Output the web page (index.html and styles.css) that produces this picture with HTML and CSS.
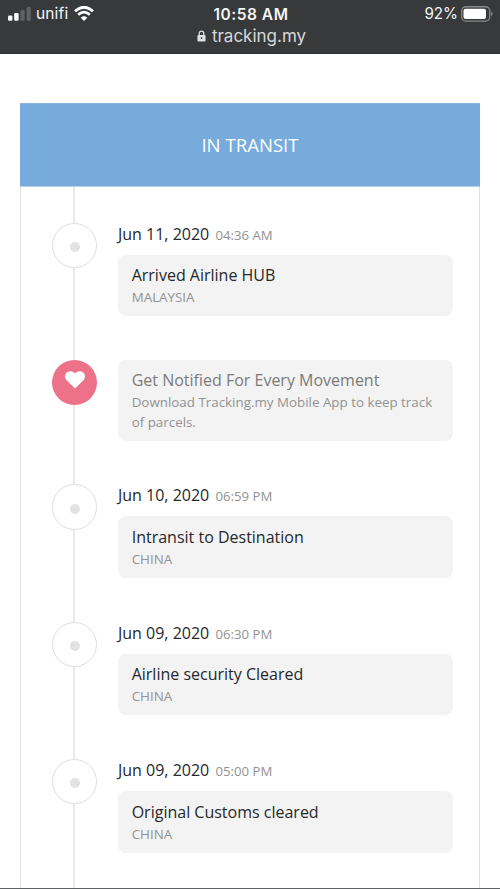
FILE: index.html
```
<!DOCTYPE html>
<html lang="en">
<head>
<meta charset="utf-8">
<title>tracking.my</title>
<link rel="stylesheet" href="styles.css">
</head>
<body>
<header class="browser">
  <div class="status">
    <div class="carrier">
      <svg class="signal" viewBox="0 0 24 14"><rect x="0" y="8.5" width="4.4" height="5.2" rx="1.2"/><rect x="6.2" y="6" width="4.4" height="7.7" rx="1.2"/><rect class="dim" x="12.4" y="3" width="4.2" height="10.7" rx="1"/><rect class="dim" x="18.6" y="0" width="4.2" height="13.7" rx="1"/></svg>
      <span>unifi</span>
      <svg class="wifi" viewBox="0 0 20 15"><path d="M1 5.2Q10-2.8 19 5.2M4.2 8.7Q10 3.5 15.8 8.7"/><path class="fill" d="M6.7 11.7Q10 8.8 13.3 11.7L10 15Z"/></svg>
    </div>
    <time class="clock">10:58 AM</time>
    <div class="power"><span>92%</span>
      <svg class="battery" viewBox="0 0 33 16"><rect class="shell" x=".75" y=".75" width="28" height="14.3" rx="4"/><rect x="2.5" y="2.7" width="22.5" height="10.4" rx="2"/><path class="tip" d="M30.2 5.2Q33 7.9 30.2 10.6Z"/></svg>
    </div>
  </div>
  <div class="address"><svg class="lock" viewBox="0 0 10 13"><path class="shackle" d="M2.5 6V3.5a2.5 2.5 0 0 1 5 0V6"/><rect x=".5" y="5.5" width="9" height="7" rx="1"/><circle class="keyhole" cx="5" cy="8.8" r="1"/></svg><span>tracking.my</span></div>
</header>
<main class="tracking">
  <h1 class="banner">IN TRANSIT</h1>
  <ol class="timeline">
    <li class="event"><span class="marker"></span><div class="body"><div class="date">Jun 11, 2020 <time>04:36 AM</time></div><div class="card"><h2>Arrived Airline HUB</h2><p>MALAYSIA</p></div></div></li>
    <li class="event promo"><span class="marker love"><svg viewBox="0 0 20 18"><path d="M10 17.5L1.8 9.5C-.5 7.2-.5 3.5 1.8 1.6C4.3-.5 7.7-.2 10 2.3C12.3-.2 15.7-.5 18.2 1.6C20.5 3.5 20.5 7.2 18.2 9.5Z"/></svg></span><div class="body"><div class="card"><h2>Get Notified For Every Movement</h2><p>Download Tracking.my Mobile App to keep track<br>of parcels.</p></div></div></li>
    <li class="event"><span class="marker"></span><div class="body"><div class="date">Jun 10, 2020 <time>06:59 PM</time></div><div class="card"><h2>Intransit to Destination</h2><p>CHINA</p></div></div></li>
    <li class="event"><span class="marker"></span><div class="body"><div class="date">Jun 09, 2020 <time>06:30 PM</time></div><div class="card"><h2>Airline security Cleared</h2><p>CHINA</p></div></div></li>
    <li class="event"><span class="marker"></span><div class="body"><div class="date">Jun 09, 2020 <time>05:00 PM</time></div><div class="card"><h2>Original Customs cleared</h2><p>CHINA</p></div></div></li>
  </ol>
</main>
</body>
</html>
```
FILE: styles.css
```
* { box-sizing: border-box; }
html, body { height: 889px; overflow: hidden; }
body { margin: 0; background: #fff; border-bottom: 1px solid #606163; color: #26282b; font-family: "Open Sans", sans-serif; }
h1, h2, p, ol { margin: 0; padding: 0; font-weight: 400; }
.browser { height: 54px; background: #38393b; border-bottom: 1px solid #2d2e30; color: #f5f5f5; font-family: Inter, sans-serif; }
.status { display: grid; grid-template-columns: 1fr auto 1fr; height: 27px; padding: 0 6px 0 8px; align-items: center; font-size: 15.5px; }
.carrier, .power { display: flex; align-items: center; }
.carrier { letter-spacing: .15px; }
.power { justify-content: flex-end; gap: 3px; font-size: 15.2px; }
.clock { font-weight: 600; letter-spacing: .5px; padding-top: 1px; }
.browser svg { fill: #fff; }
.signal { width: 24px; height: 14px; margin-right: 4px; }
.browser .dim { fill: #606163; }
.wifi { width: 20px; height: 15px; margin-left: 6px; }
.wifi path { fill: none; stroke: #fff; stroke-width: 2.8; }
.wifi .fill { fill: #fff; stroke: none; }
.battery { width: 33px; height: 16px; }
.battery .shell { fill: none; stroke: #88898a; stroke-width: 1.3; }
.browser .tip { fill: #88898a; }
.address { display: flex; justify-content: center; align-items: center; gap: 6px; height: 17px; padding-left: 3px; font-size: 17px; color: #d8d8d9; }
.browser .lock { width: 9px; height: 12px; fill: #dedede; }
.lock .shackle { fill: none; stroke: #dedede; stroke-width: 1.4; }
.browser .keyhole { fill: #38393b; }
.tracking { height: 785px; margin: 49px 20px 0; border: solid #e2e2e3; border-width: 0 1px; }
.banner { height: 84px; margin: 0 -1px; background: #76abdc; border-top: 1px solid #8ab7e0; border-bottom: 1px solid #b5d0e9; color: #fff; font-size: 18.6px; line-height: 82px; text-align: center; }
.timeline { height: 701px; padding-top: 35.5px; list-style: none; background: linear-gradient(#e9e9e9, #e9e9e9) 52px 0 / 2px 100% no-repeat; }
.event { display: flex; height: 137.3px; padding-left: 31px; }
.promo { height: 124.7px; }
.marker { display: flex; align-items: center; justify-content: center; width: 45.4px; height: 45.4px; flex: none; border: 1px solid #dedede; border-radius: 50%; background: #fff; }
.marker:empty::before { content: ""; width: 10px; height: 10px; margin-top: 3px; border-radius: 50%; background: #e2e2e2; }
.love { border: 0; background: #ed7189; }
.love svg { width: 20px; height: 18px; margin-top: -4px; fill: #fff; }
.body { width: 335px; margin-left: 20.6px; }
.date { height: 32px; font-size: 16px; line-height: 23px; white-space: nowrap; }
.date time { margin-left: 2px; color: #929292; font-size: 13.2px; }
.card { height: 61.5px; padding: 8.5px 13.7px; border-radius: 8px; background: #f3f3f3; }
.card h2 { font-size: 16px; line-height: 24px; }
.card p { color: #929292; font-size: 13.36px; line-height: 20px; white-space: nowrap; }
.promo .card { height: 81px; }
.promo h2 { color: #7b7b7b; }
```
